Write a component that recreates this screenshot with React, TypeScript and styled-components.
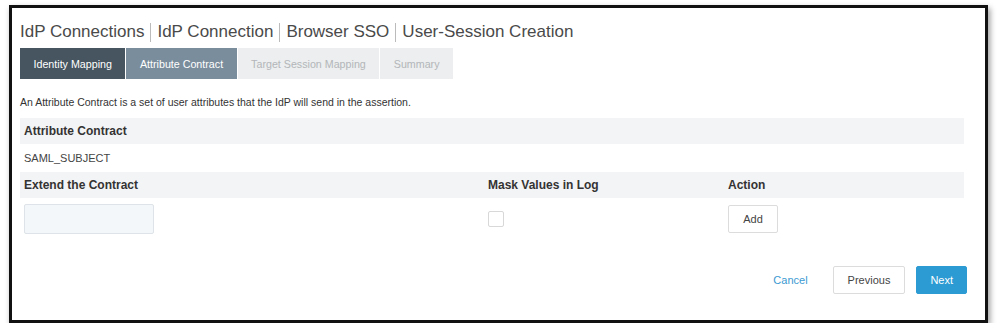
import React from "react";
import styled, { createGlobalStyle } from "styled-components";

const Global = createGlobalStyle`
  html, body { margin: 0; padding: 0; background: #fff; }
  body { font-family: "Liberation Sans", Arial, sans-serif; }
`;

const Frame = styled.div`
  margin: 5px 0 0 9px;
  width: 979px;
  height: 318px;
  box-sizing: border-box;
  border: 3px solid #111;
  box-shadow: 2px 3px 6px rgba(0, 0, 0, 0.4);
  background: #fff;
  padding: 12px 21px 0 8px;
  display: flex;
  flex-direction: column;
`;

const Title = styled.h1`
  margin: 0;
  font-size: 17px;
  font-weight: normal;
  color: #4a4a4a;
  line-height: 24px;
  display: flex;
  align-items: center;
`;

const Sep = styled.span`
  display: inline-block;
  width: 1px;
  height: 19px;
  background: #bbb;
  margin: 0 6px;
`;

const Tabs = styled.div`
  display: flex;
  gap: 1px;
  margin-top: 4px;
`;

const Tab = styled.div<{ $state: "done" | "active" | "todo" }>`
  height: 31px;
  padding: 0 13.5px;
  display: flex;
  align-items: center;
  font-size: 10.7px;
  color: ${(p) => (p.$state === "todo" ? "#b3b6b9" : "#fff")};
  background: ${(p) =>
    p.$state === "done" ? "#46555f" : p.$state === "active" ? "#7a8d9c" : "#eceeef"};
`;

const Desc = styled.p`
  margin: 17px 0 0;
  font-size: 10.5px;
  color: #333;
`;

const Band = styled.div<{ $flush?: boolean }>`
  margin-top: ${(p) => (p.$flush ? "0" : "10px")};
  height: 26px;
  background: #f3f4f5;
  display: grid;
  grid-template-columns: 464px 240px 1fr;
  align-items: center;
  padding-left: 4px;
  font-size: 12px;
  font-weight: bold;
  color: #333;
`;

const Value = styled.div`
  height: 28px;
  display: flex;
  align-items: center;
  padding-left: 4px;
  font-size: 11px;
  color: #444;
`;

const Row = styled.div`
  display: grid;
  grid-template-columns: 464px 240px 1fr;
  align-items: center;
  padding-left: 4px;
  margin-top: 6px;
`;

const Input = styled.div`
  width: 130px;
  height: 30px;
  box-sizing: border-box;
  border: 1px solid #dde3e8;
  border-radius: 2px;
  background: #f3f7fa;
`;

const Check = styled.div`
  width: 16px;
  height: 16px;
  box-sizing: border-box;
  border: 1px solid #d8d8d8;
  border-radius: 2px;
  background: #fff;
`;

const Button = styled.button<{ $primary?: boolean }>`
  font-family: "Liberation Sans", Arial, sans-serif;
  font-size: 11px;
  height: 28px;
  box-sizing: border-box;
  border-radius: 2px;
  padding: 0 ${(p) => (p.$primary ? "13px" : "14px")};
  border: 1px solid ${(p) => (p.$primary ? "#2d9bd3" : "#dcdcdc")};
  background: ${(p) => (p.$primary ? "#2d9bd3" : "#fff")};
  color: ${(p) => (p.$primary ? "#fff" : "#444")};
`;

const SmallButton = styled(Button)`
  width: 50px;
  padding: 0;
`;

const Footer = styled.div`
  margin-top: auto;
  margin-bottom: 26px;
  margin-right: -3px;
  display: flex;
  justify-content: flex-end;
  align-items: center;
  gap: 11px;
`;

const LinkButton = styled.span`
  font-size: 11px;
  color: #3b9ad2;
  margin-right: 14px;
`;

export default function App() {
  return (
    <>
      <Global />
      <Frame>
        <Title>
          IdP Connections<Sep />IdP Connection<Sep />Browser SSO<Sep />User-Session Creation
        </Title>
        <Tabs>
          <Tab $state="done">Identity Mapping</Tab>
          <Tab $state="active">Attribute Contract</Tab>
          <Tab $state="todo">Target Session Mapping</Tab>
          <Tab $state="todo">Summary</Tab>
        </Tabs>
        <Desc>An Attribute Contract is a set of user attributes that the IdP will send in the assertion.</Desc>
        <Band>
          <span>Attribute Contract</span>
        </Band>
        <Value>SAML_SUBJECT</Value>
        <Band $flush>
          <span>Extend the Contract</span>
          <span>Mask Values in Log</span>
          <span>Action</span>
        </Band>
        <Row>
          <Input />
          <Check />
          <SmallButton>Add</SmallButton>
        </Row>
        <Footer>
          <LinkButton>Cancel</LinkButton>
          <Button>Previous</Button>
          <Button $primary>Next</Button>
        </Footer>
      </Frame>
    </>
  );
}
